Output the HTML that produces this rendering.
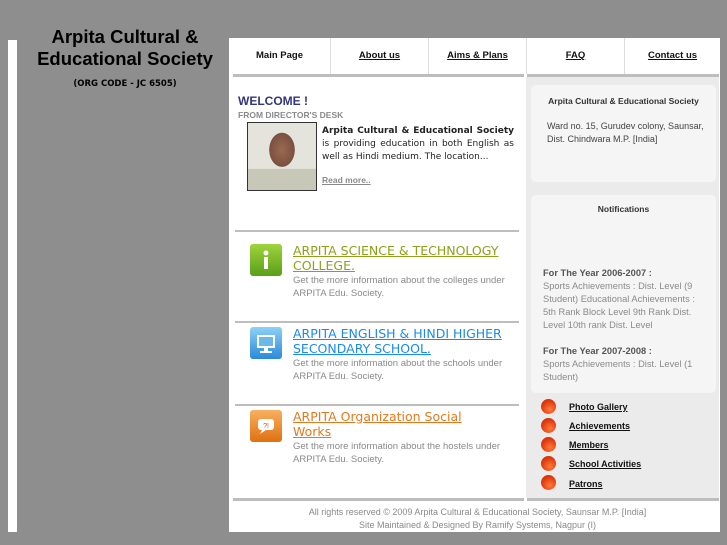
<!DOCTYPE html>
<html><head><meta charset="utf-8"><style>
*{margin:0;padding:0;box-sizing:border-box}
body{width:727px;height:545px;background:#8e8e8e;font-family:"Liberation Sans",sans-serif;position:relative;overflow:hidden}
.a{position:absolute}
.bar{left:8px;top:40px;width:9px;height:492px;background:#fff}
.title{left:20px;top:26px;width:210px;text-align:center;font-family:"Liberation Sans",sans-serif;font-weight:bold;font-size:18.5px;line-height:22px;color:#000}
.org{left:20px;top:79px;width:210px;text-align:center;font-family:"DejaVu Sans",sans-serif;font-weight:bold;font-size:8.5px;color:#000}
.panel{left:229px;top:44px;width:491px;height:488px;background:#fff}
.tab{top:38px;height:36px;background:#fff;font-size:9.5px;font-weight:bold;color:#111;text-align:center;line-height:36px;border-right:1px solid #ddd}
.line{height:3px;background:#bdbdbd}
.right{left:526px;top:77px;width:193px;height:421px;background:#ebebeb}
.box{background:#f5f5f5;border-radius:5px}
h1{font-size:12px;color:#35357a}
.item{left:250px;width:260px}
.item .ic{position:absolute;left:0;top:0;width:32px;height:32px;border-radius:3px}
.item .t{position:absolute;left:43px;top:-1px;font-family:"DejaVu Sans",sans-serif;font-size:12.5px;line-height:15px;text-decoration:underline;width:212px}
.item .d{position:absolute;left:43px;top:30px;font-size:9.5px;line-height:13px;color:#8a8a8a;width:212px}
.lk{left:541px;font-size:9px;font-weight:bold;text-decoration:underline;color:#111}
.dot{left:541px;width:15px;height:15px;border-radius:50%;background:radial-gradient(circle at 60% 70%,#ff7a3a,#e03a10 60%,#c02a00)}
</style></head><body>
<div class="a bar"></div>
<div class="a title">Arpita Cultural &amp;<br>Educational Society</div>
<div class="a org">(ORG CODE - JC 6505)</div>
<div class="a panel"></div>
<div class="a tab" style="left:229px;width:102px"><span>Main Page</span></div>
<div class="a tab" style="left:331px;width:98px"><u>About us</u></div>
<div class="a tab" style="left:429px;width:98px"><u>Aims &amp; Plans</u></div>
<div class="a tab" style="left:527px;width:98px"><u>FAQ</u></div>
<div class="a tab" style="left:625px;width:95px;border:0"><u>Contact us</u></div>
<div class="a line" style="left:233px;top:74px;width:291px"></div>
<div class="a line" style="left:527px;top:74px;width:192px"></div>
<div class="a right"></div>
<div class="a box" style="left:531px;top:85px;width:185px;height:97px"></div>
<div class="a" style="left:531px;top:96px;width:185px;text-align:center;font-size:8.5px;font-weight:bold;color:#333">Arpita Cultural &amp; Educational Society</div>
<div class="a" style="left:547px;top:120px;width:162px;font-size:9px;line-height:13px;color:#444">Ward no. 15, Gurudev colony, Saunsar, Dist. Chindwara M.P. [India]</div>
<div class="a box" style="left:531px;top:195px;width:185px;height:198px"></div>
<div class="a" style="left:531px;top:204px;width:185px;text-align:center;font-size:8.5px;font-weight:bold;color:#333">Notifications</div>
<div class="a" style="left:543px;top:267px;width:165px;font-size:9.3px;line-height:13px;color:#8a8a8a"><b style="color:#555">For The Year 2006-2007 :</b><br>Sports Achievements : Dist. Level (9 Student) Educational Achievements : 5th Rank Block Level 9th Rank Dist. Level 10th rank Dist. Level<br><br><b style="color:#555">For The Year 2007-2008 :</b><br>Sports Achievements : Dist. Level (1 Student)</div>
<div class="a dot" style="top:399px"></div><div class="a lk" style="left:569px;top:402px">Photo Gallery</div>
<div class="a dot" style="top:418px"></div><div class="a lk" style="left:569px;top:421px">Achievements</div>
<div class="a dot" style="top:437px"></div><div class="a lk" style="left:569px;top:440px">Members</div>
<div class="a dot" style="top:456px"></div><div class="a lk" style="left:569px;top:459px">School Activities</div>
<div class="a dot" style="top:475px"></div><div class="a lk" style="left:569px;top:479px">Patrons</div>
<h1 class="a" style="left:238px;top:94px">WELCOME !</h1>
<div class="a" style="left:238px;top:110px;font-size:8.5px;font-weight:bold;color:#8a8a8a">FROM DIRECTOR'S DESK</div>
<div class="a" style="left:247px;top:122px;width:70px;height:69px;border:1px solid #333;background:radial-gradient(ellipse 18px 24px at 50% 40%,#9a6a50,#7a5040 70%,transparent 72%),linear-gradient(#e4e4dc 68%,#c8c8b8 69%);"></div>
<div class="a" style="left:322px;top:125px;width:192px;font-family:'DejaVu Sans',sans-serif;font-size:9px;line-height:13px;color:#222;text-align:justify"><b>Arpita Cultural &amp; Educational Society</b> is providing education in both English as well as Hindi medium. The location...</div>
<div class="a" style="left:322px;top:175px;font-size:8.5px;color:#8a8a8a;text-decoration:underline;font-weight:bold">Read more..</div>
<div class="a line" style="left:235px;top:230px;width:284px;height:2px"></div>
<div class="a line" style="left:235px;top:321px;width:284px;height:2px"></div>
<div class="a line" style="left:235px;top:404px;width:284px;height:2px"></div>
<div class="a item" style="top:244px"><div class="ic" style="background:linear-gradient(#9fd43c,#5a9e1a)"><svg width="32" height="32"><circle cx="16" cy="9" r="2.5" fill="#fff"/><rect x="14" y="13" width="4" height="12" fill="#fff"/></svg></div><div class="t" style="color:#8aa21a">ARPITA SCIENCE &amp; TECHNOLOGY COLLEGE.</div><div class="d">Get the more information about the colleges under ARPITA Edu. Society.</div></div>
<div class="a item" style="top:327px"><div class="ic" style="background:linear-gradient(#8fd0f8,#2a8ad8)"><svg width="32" height="32"><rect x="7" y="8" width="18" height="13" fill="#fff"/><rect x="9" y="10" width="14" height="9" fill="#6cb8e8"/><rect x="14" y="21" width="4" height="3" fill="#fff"/><rect x="10" y="24" width="12" height="2" fill="#fff"/></svg></div><div class="t" style="color:#1a8aee;width:220px">ARPITA ENGLISH &amp; HINDI HIGHER SECONDARY SCHOOL.</div><div class="d">Get the more information about the schools under ARPITA Edu. Society.</div></div>
<div class="a item" style="top:410px"><div class="ic" style="background:linear-gradient(#f8b060,#e07010)"><svg width="32" height="32"><rect x="8" y="9" width="16" height="11" rx="3" fill="#fff"/><path d="M12 20l-2 4 6-4z" fill="#fff"/><text x="16" y="18" font-size="7" text-anchor="middle" fill="#a55" font-family="Liberation Sans">?!</text></svg></div><div class="t" style="color:#e07a20;width:200px">ARPITA Organization Social Works</div><div class="d">Get the more information about the hostels under ARPITA Edu. Society.</div></div>
<div class="a line" style="left:233px;top:498px;width:291px"></div>
<div class="a line" style="left:527px;top:498px;width:192px"></div>
<div class="a" style="left:229px;top:506px;width:497px;text-align:center;font-size:9px;line-height:13px;color:#8a8a8a">All rights reserved © 2009 Arpita Cultural &amp; Educational Society, Saunsar M.P. [India]<br>Site Maintained &amp; Designed By Ramify Systems, Nagpur (I)</div>
</body></html>
